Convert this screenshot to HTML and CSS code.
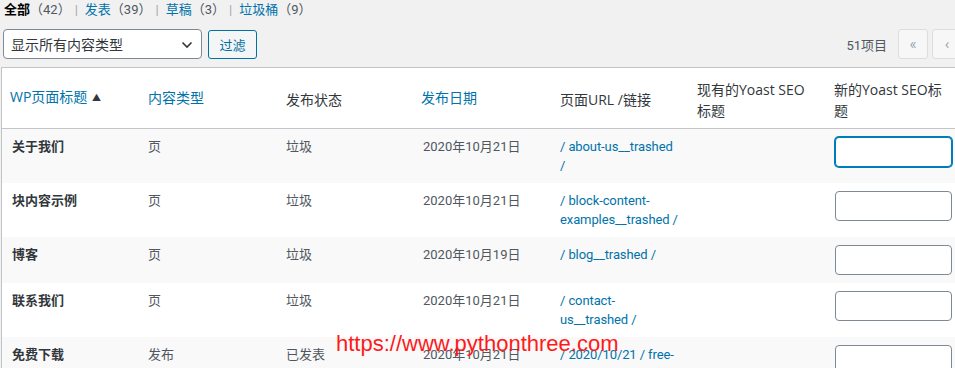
FILE: index.html
```html
<!DOCTYPE html>
<html lang="zh-CN">
<head>
<meta charset="utf-8">
<title>Yoast SEO 批量编辑</title>
<link rel="stylesheet" href="styles.css">
</head>
<body>
<div class="page">
  <ul class="subsubsub">
    <li><a class="current" href="#">全部<span class="count">（42）</span></a><span class="sep">|</span></li>
    <li><a href="#">发表<span class="count">（39）</span></a><span class="sep">|</span></li>
    <li><a href="#">草稿<span class="count">（3）</span></a><span class="sep">|</span></li>
    <li><a href="#">垃圾桶<span class="count">（9）</span></a></li>
  </ul>

  <div class="tablenav">
    <div class="filters">
      <div class="select">
        <span>显示所有内容类型</span>
        <svg class="chev" width="12" height="8" viewBox="0 0 12 8"><path d="M1.5 1.5 L6 6 L10.5 1.5" fill="none" stroke="#32373c" stroke-width="1.6"/></svg>
      </div>
      <button class="btn">过滤</button>
    </div>
    <div class="pager">
      <span class="items">51项目</span>
      <span class="pbtn">«</span>
      <span class="pbtn">‹</span>
    </div>
  </div>

  <table class="list">
    <colgroup>
      <col class="w136"><col class="w138"><col class="w137"><col class="w137"><col class="w137"><col class="w137"><col class="w137">
    </colgroup>
    <thead>
      <tr>
        <th class="sortable"><a href="#">WP页面标题</a> <span class="arrow">▲</span></th>
        <th class="link"><a href="#">内容类型</a></th>
        <th class="plain">发布状态</th>
        <th class="sortable"><a href="#">发布日期</a></th>
        <th class="plain">页面URL /链接</th>
        <th class="plain">现有的Yoast SEO 标题</th>
        <th class="plain">新的Yoast SEO标题</th>
      </tr>
    </thead>
    <tbody>
      <tr>
        <td class="title">关于我们</td><td>页</td><td>垃圾</td><td>2020年10月21日</td>
        <td class="url"><a href="#">/ about-us__trashed /</a></td><td></td>
        <td><input class="field focus" type="text"></td>
      </tr>
      <tr>
        <td class="title">块内容示例</td><td>页</td><td>垃圾</td><td>2020年10月21日</td>
        <td class="url"><a href="#">/ block-content-examples__trashed /</a></td><td></td>
        <td><input class="field" type="text"></td>
      </tr>
      <tr>
        <td class="title">博客</td><td>页</td><td>垃圾</td><td>2020年10月19日</td>
        <td class="url"><a href="#">/ blog__trashed /</a></td><td></td>
        <td><input class="field" type="text"></td>
      </tr>
      <tr>
        <td class="title">联系我们</td><td>页</td><td>垃圾</td><td>2020年10月21日</td>
        <td class="url"><a href="#">/ contact-us__trashed /</a></td><td></td>
        <td><input class="field" type="text"></td>
      </tr>
      <tr>
        <td class="title">免费下载</td><td>发布</td><td>已发表</td><td>2020年10月21日</td>
        <td class="url"><a href="#">/ 2020/10/21 / free-download /</a></td><td></td>
        <td><input class="field" type="text"></td>
      </tr>
    </tbody>
  </table>

  <div class="watermark">https://www.pythonthree.com</div>
</div>
</body>
</html>
```

FILE: styles.css
```css
html, body {
  margin: 0;
  padding: 0;
  overflow: hidden;
  background: #f1f1f1;
}
body {
  font-family: Roboto, "Noto Sans CJK SC", sans-serif;
  font-size: 13px;
  color: #50575e;
  width: 955px;
  height: 368px;
}
.page {
  position: relative;
  padding-left: 1px;
}
a { color: #0073aa; text-decoration: none; }

.subsubsub {
  list-style: none;
  margin: 0 0 0 3px;
  padding: 0;
  height: 20px;
  line-height: 20px;
  display: flex;
}
.subsubsub li { display: flex; }
.subsubsub .count { color: #50575e; }
.subsubsub .current { color: #000; font-weight: bold; }
.subsubsub .current .count { font-weight: normal; }
.subsubsub .sep { color: #a0a5aa; margin: 0 7px 0 4px; }

.tablenav {
  display: flex;
  justify-content: space-between;
  align-items: center;
  margin-top: 9px;
  height: 30px;
}
.filters { display: flex; align-items: center; gap: 6px; margin-left: 2px; }
.select {
  box-sizing: border-box;
  width: 199px;
  height: 30px;
  border: 1px solid #7e8993;
  border-radius: 4px;
  background: #fff;
  display: flex;
  align-items: center;
  justify-content: space-between;
  padding: 0 8px 0 7px;
  font-size: 14px;
  color: #32373c;
}
.chev { margin-top: 1px; }
.btn {
  box-sizing: border-box;
  height: 29px;
  width: 49px;
  padding: 0;
  border: 1px solid #0071a1;
  border-radius: 3px;
  background: #f3f5f6;
  color: #0071a1;
  font-family: inherit;
  font-size: 13px;
}
.pager { display: flex; align-items: center; margin-right: -11px; }
.items { margin-right: 11px; color: #50575e; }
.pbtn {
  box-sizing: border-box;
  width: 30px;
  height: 30px;
  border: 1px solid #ddd;
  border-radius: 3px;
  background: #f7f7f7;
  color: #a0a5aa;
  display: flex;
  align-items: center;
  justify-content: center;
  margin-right: 4px;
  font-size: 15px;
}

.list {
  margin-top: 8px;
  table-layout: fixed;
  border-collapse: separate;
  border-spacing: 0;
  width: 961px;
  border: 1px solid #c3c4c7;
  background: #fff;
}
.w136 { width: 136px; }
.w137 { width: 137px; }
.w138 { width: 138px; }

.list th {
  height: 60px;
  padding: 0 10px;
  border-bottom: 1px solid #c3c4c7;
  text-align: left;
  font-family: "Open Sans", "Noto Sans CJK SC", sans-serif;
  font-size: 14px;
  font-weight: normal;
  vertical-align: middle;
  line-height: 21px;
  color: #32373c;
}
.list th.sortable { padding-left: 8px; padding-bottom: 2px; height: 58px; }
.list th.link { padding-bottom: 2px; height: 58px; }
.list th.plain { padding-top: 3px; height: 57px; }
.arrow { font-size: 9px; color: #32373c; position: relative; top: -1px; margin-left: 1px; }

.list td {
  padding: 8px 10px;
  line-height: 19px;
  vertical-align: top;
  color: #50575e;
}
.list tbody tr:nth-child(odd) td { background: #f9f9f9; }
.list td.title { font-weight: bold; color: #32373c; }
.list td.url { padding-right: 7px; letter-spacing: -0.1px; }

.field {
  box-sizing: border-box;
  display: block;
  width: 117px;
  height: 30px;
  margin: 0 0 0 1px;
  border: 1px solid #7e8993;
  border-radius: 4px;
  background: #fff;
}
.field.focus {
  border-color: #007cba;
  box-shadow: 0 0 0 1px #007cba;
}

.watermark {
  position: absolute;
  left: 336px;
  top: 333px;
  font-family: "Liberation Sans", Arial, sans-serif;
  font-size: 22px;
  line-height: 22px;
  color: #ff1a1a;
}
```
